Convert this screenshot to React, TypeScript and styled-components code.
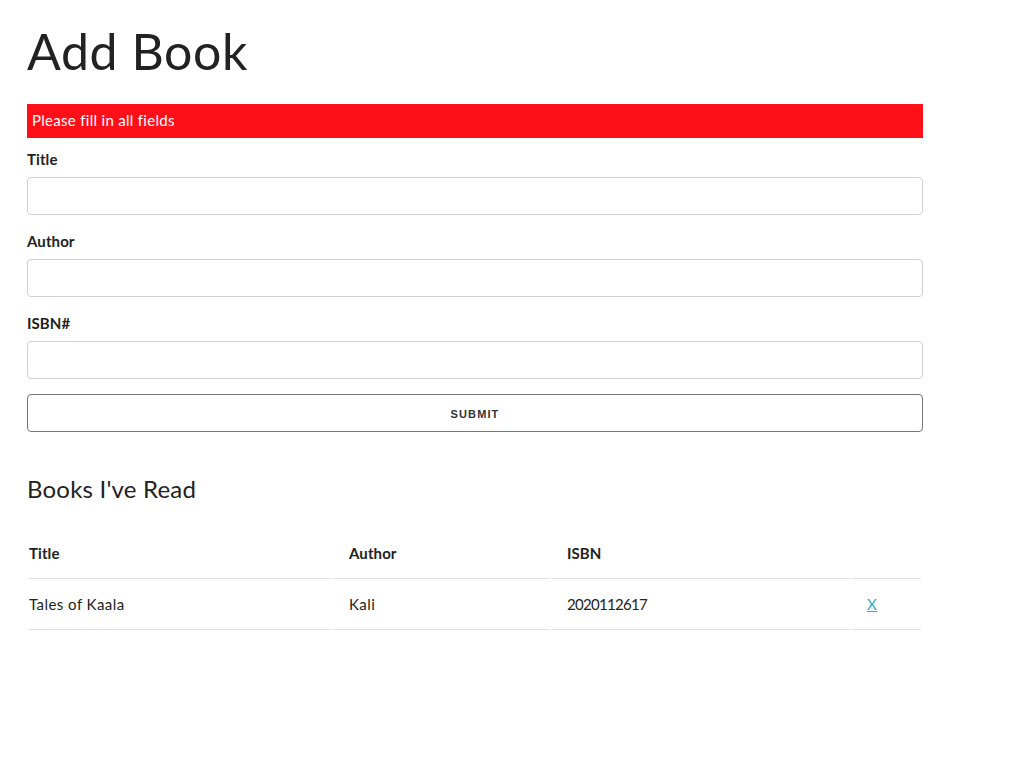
import React from "react";
import styled, { createGlobalStyle } from "styled-components";

const GlobalStyle = createGlobalStyle`
  html, body {
    margin: 0;
    padding: 0;
    background: #fff;
  }
  body {
    font-family: "Lato", "Open Sans", sans-serif;
    font-size: 15px;
    line-height: 24px;
    color: #222;
  }
  * { box-sizing: border-box; }
`;

const Page = styled.div`
  padding: 21px 0 40px 27px;
`;

const Container = styled.div`
  width: 896px;
`;

const Heading = styled.h1`
  margin: 0 0 23px;
  font-size: 50px;
  line-height: 60px;
  font-weight: 400;
  letter-spacing: 0.6px;
`;

const Alert = styled.div`
  height: 34px;
  line-height: 33px;
  padding-left: 5px;
  margin-bottom: 10px;
  background: #ff1019;
  color: #fff;
  font-size: 15px;
  letter-spacing: 0.3px;
`;

const Form = styled.form`
  display: flex;
  flex-direction: column;
`;

const Field = styled.div`
  display: flex;
  flex-direction: column;
  margin-bottom: 15px;
`;

const Label = styled.label`
  display: block;
  margin-bottom: 5px;
  font-weight: 700;
  line-height: 23px;
  padding-bottom: 1px;
  letter-spacing: 0.1px;
`;

const Input = styled.input`
  height: 38px;
  width: 100%;
  padding: 6px 10px;
  border: 1px solid #d1d1d1;
  border-radius: 4px;
  background: #fff;
  font: inherit;
  outline: none;
`;

const SubmitButton = styled.button`
  height: 38px;
  width: 100%;
  padding: 0 30px;
  border: 1px solid #777;
  border-radius: 4px;
  background: transparent;
  color: #333;
  font-family: "Liberation Sans", Arial, sans-serif;
  font-size: 11px;
  font-weight: 700;
  line-height: 38px;
  letter-spacing: 1.1px;
  text-transform: uppercase;
  cursor: pointer;
`;

const SubHeading = styled.h5`
  margin: 39px 0 21px;
  font-size: 24px;
  line-height: 36px;
  font-weight: 400;
  letter-spacing: 0.2px;
`;

const Table = styled.table`
  width: 896px;
  table-layout: fixed;
  border-spacing: 2px;
  border-collapse: separate;
`;

const HeadCell = styled.th<{ $first?: boolean }>`
  text-align: left;
  font-weight: 700;
  padding: 11px 15px 13px ${(p) => (p.$first ? "0" : "15px")};
  border-bottom: 1px solid #e1e1e1;
  line-height: 24px;
  letter-spacing: 0.1px;
`;

const Cell = styled.td<{ $first?: boolean; $numeric?: boolean }>`
  text-align: left;
  padding: 11px 15px 13px ${(p) => (p.$first ? "0" : "15px")};
  border-bottom: 1px solid #e1e1e1;
  line-height: 24px;
  letter-spacing: ${(p) => (p.$numeric ? "-0.7px" : "0.45px")};
`;

const DeleteLink = styled.a`
  color: #1eaedb;
  text-decoration: underline;
  cursor: pointer;
`;

const fields = ["Title", "Author", "ISBN#"];

export default function App() {
  return (
    <>
      <GlobalStyle />
      <Page>
        <Container>
          <Heading>Add Book</Heading>
          <Alert>Please fill in all fields</Alert>
          <Form onSubmit={(e) => e.preventDefault()}>
            {fields.map((f) => (
              <Field key={f}>
                <Label>{f}</Label>
                <Input type="text" />
              </Field>
            ))}
            <SubmitButton type="submit">Submit</SubmitButton>
          </Form>
          <SubHeading>Books I've Read</SubHeading>
          <Table>
            <colgroup>
              <col style={{ width: 303 }} />
              <col style={{ width: 216 }} />
              <col style={{ width: 298 }} />
              <col style={{ width: 69 }} />
            </colgroup>
            <thead>
              <tr>
                <HeadCell $first>Title</HeadCell>
                <HeadCell>Author</HeadCell>
                <HeadCell>ISBN</HeadCell>
                <HeadCell></HeadCell>
              </tr>
            </thead>
            <tbody>
              <tr>
                <Cell $first>Tales of Kaala</Cell>
                <Cell>Kali</Cell>
                <Cell $numeric>2020112617</Cell>
                <Cell>
                  <DeleteLink href="#">X</DeleteLink>
                </Cell>
              </tr>
            </tbody>
          </Table>
        </Container>
      </Page>
    </>
  );
}
